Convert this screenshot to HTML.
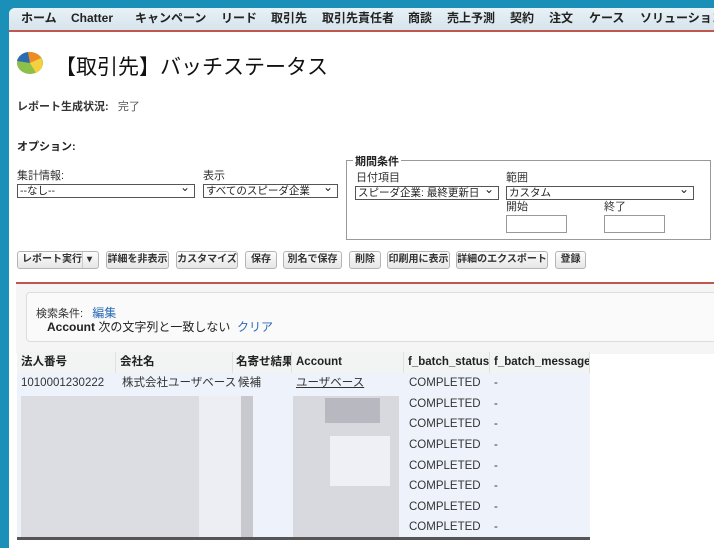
<!DOCTYPE html><html><head><meta charset="utf-8"><style>
body{margin:0;width:714px;height:540px;overflow:hidden;background:#1a8fb8;font-family:"Liberation Sans","Noto Sans CJK JP",sans-serif;font-size:12px;color:#222;position:relative}
.page{position:absolute;left:9px;top:8px;width:720px;height:540px;background:#fff;border-top-left-radius:6px}
.a{position:absolute;white-space:nowrap}
.nav{position:absolute;left:9px;top:8px;width:705px;height:22px;background:linear-gradient(#e8f1f6,#d6e4ec);border-bottom:2px solid #c0574f;border-top-left-radius:6px}
.n{position:absolute;top:11px;line-height:15px;font-size:12px;font-weight:bold;color:#222;white-space:nowrap}
.btn{position:absolute;top:251px;border:1px solid #b5b5b5;border-radius:3px;background:linear-gradient(#fdfdfd,#e6e6e6);font-size:10px;font-weight:bold;line-height:16px;text-align:center;color:#333;white-space:nowrap;overflow:hidden;box-sizing:border-box;height:18px}
.sel{position:absolute;height:12px;border:1px solid #555;font-size:10.5px;line-height:13px;background:#fff;padding-left:2px;white-space:nowrap;overflow:hidden}
.sel:after{content:"⌄";position:absolute;right:4px;top:-4px;font-size:12px}
.l{position:absolute;font-size:11px;color:#333;line-height:13px;white-space:nowrap}
.th{position:absolute;top:352px;height:21px;line-height:21px;background:#f2f3f3;font-weight:bold;font-size:11.5px;padding-left:4px;box-sizing:border-box;border-right:1px solid #e0e0e0;white-space:nowrap;overflow:hidden}
.td{position:absolute;font-size:11.5px;color:#333;white-space:nowrap;line-height:20px}
</style></head><body>
<div class="page"></div>
<div class="nav"></div>
<div class="n" style="left:21px">ホーム</div><div class="n" style="left:71px">Chatter</div><div class="n" style="left:135px">キャンペーン</div><div class="n" style="left:221px">リード</div><div class="n" style="left:271px">取引先</div><div class="n" style="left:322px">取引先責任者</div><div class="n" style="left:408px">商談</div><div class="n" style="left:447px">売上予測</div><div class="n" style="left:510px">契約</div><div class="n" style="left:549px">注文</div><div class="n" style="left:589px">ケース</div><div class="n" style="left:640px">ソリューション</div>
<svg class="a" style="left:16px;top:50px" width="28" height="26" viewBox="0 0 28 26"><ellipse cx="14" cy="13" rx="13" ry="11" fill="#8cc04a"/><path d="M14 13 L1 11 A13 11 0 0 1 12 2Z" fill="#2b6cb0"/><path d="M14 13 L12 2 A13 11 0 0 1 25 8Z" fill="#f08a24"/><path d="M14 13 L25 8 A13 11 0 0 1 20 23Z" fill="#f4d03f"/></svg>
<div class="a" style="left:55px;top:54px;font-size:21px;line-height:28px;color:#111">【取引先】バッチステータス</div>
<div class="a" style="left:17px;top:98px;font-size:11px"><b style="color:#333">レポート生成状況:</b>&nbsp;&nbsp;&nbsp;<span style="color:#555">完了</span></div>
<div class="a" style="left:17px;top:138px;font-size:11px;font-weight:bold">オプション:</div>
<div class="l" style="left:17px;top:170px">集計情報:</div>
<div class="sel" style="left:17px;top:184px;width:174px">--なし--</div>
<div class="l" style="left:203px;top:170px">表示</div>
<div class="sel" style="left:203px;top:184px;width:131px">すべてのスピーダ企業</div>
<div class="a" style="left:346px;top:160px;width:363px;height:78px;border:1px solid #999"></div>
<div class="a" style="left:353px;top:153px;background:#fff;padding:0 2px;font-size:11px;font-weight:bold">期間条件</div>
<div class="l" style="left:356px;top:172px">日付項目</div>
<div class="sel" style="left:355px;top:186px;width:140px">スピーダ企業: 最終更新日</div>
<div class="l" style="left:506px;top:172px">範囲</div>
<div class="sel" style="left:506px;top:186px;width:184px">カスタム</div>
<div class="l" style="left:506px;top:201px">開始</div>
<div class="l" style="left:604px;top:201px">終了</div>
<div class="a" style="left:506px;top:215px;width:59px;height:16px;border:1px solid #999"></div>
<div class="a" style="left:604px;top:215px;width:59px;height:16px;border:1px solid #999"></div>
<div class="btn" style="left:17px;width:82px;text-align:left;padding-left:4px">レポート実行<span style="position:absolute;left:64px;top:0;border-left:1px solid #ccc;padding-left:4px">▾</span></div>
<div class="btn" style="left:106px;width:63px">詳細を非表示</div>
<div class="btn" style="left:176px;width:62px">カスタマイズ</div>
<div class="btn" style="left:245px;width:32px">保存</div>
<div class="btn" style="left:283px;width:59px">別名で保存</div>
<div class="btn" style="left:349px;width:32px">削除</div>
<div class="btn" style="left:387px;width:63px">印刷用に表示</div>
<div class="btn" style="left:456px;width:92px">詳細のエクスポート</div>
<div class="btn" style="left:555px;width:31px">登録</div>
<div class="a" style="left:16px;top:282px;width:700px;height:70px;background:#f5f5f5;border-top:2px solid #c0574f"></div>
<div class="a" style="left:26px;top:292px;width:690px;height:48px;background:#fafafa;border:1px solid #ddd;border-radius:4px"></div>
<div class="a" style="left:36px;top:304px;font-size:11px;color:#333">検索条件:&nbsp;&nbsp;&nbsp;<span style="color:#2a6bb5;font-size:12px">編集</span></div>
<div class="a" style="left:47px;top:318px;font-size:12px"><b>Account</b> 次の文字列と一致しない&nbsp;&nbsp;<span style="color:#2a6bb5">クリア</span></div>
<div class="th" style="left:17px;width:99px">法人番号</div>
<div class="th" style="left:116px;width:117px">会社名</div>
<div class="th" style="left:233px;width:59px;padding-left:3px">名寄せ結果</div>
<div class="th" style="left:292px;width:112px">Account</div>
<div class="th" style="left:404px;width:86px">f_batch_status</div>
<div class="th" style="left:490px;width:100px">f_batch_message</div>
<div class="a" style="left:17px;top:373px;width:573px;height:165px;background:#eef3fb"></div>
<div class="td" style="left:21px;top:373px">1010001230222</div>
<div class="td" style="left:122px;top:373px">株式会社ユーザベース</div>
<div class="td" style="left:238px;top:373px">候補</div>
<div class="td" style="left:296px;top:373px;text-decoration:underline">ユーザベース</div>
<div class="a" style="left:21px;top:396px;width:180px;height:141px;background:#dcdde3"></div>
<div class="a" style="left:199px;top:396px;width:42px;height:141px;background:#eceef3"></div>
<div class="a" style="left:241px;top:396px;width:12px;height:141px;background:#c8c9cf"></div>
<div class="a" style="left:293px;top:396px;width:106px;height:141px;background:#d8d9df"></div>
<div class="a" style="left:325px;top:398px;width:55px;height:25px;background:#b8b9c0"></div>
<div class="a" style="left:330px;top:436px;width:60px;height:50px;background:#eef0f5"></div>
<div class="td" style="left:409px;top:373px">COMPLETED</div><div class="td" style="left:494px;top:373px">-</div>
<div class="td" style="left:409px;top:394px">COMPLETED</div><div class="td" style="left:494px;top:394px">-</div>
<div class="td" style="left:409px;top:414px">COMPLETED</div><div class="td" style="left:494px;top:414px">-</div>
<div class="td" style="left:409px;top:435px">COMPLETED</div><div class="td" style="left:494px;top:435px">-</div>
<div class="td" style="left:409px;top:456px">COMPLETED</div><div class="td" style="left:494px;top:456px">-</div>
<div class="td" style="left:409px;top:476px">COMPLETED</div><div class="td" style="left:494px;top:476px">-</div>
<div class="td" style="left:409px;top:497px">COMPLETED</div><div class="td" style="left:494px;top:497px">-</div>
<div class="td" style="left:409px;top:517px">COMPLETED</div><div class="td" style="left:494px;top:517px">-</div>
<div class="a" style="left:17px;top:537px;width:573px;height:3px;background:#555"></div>
</body></html>
